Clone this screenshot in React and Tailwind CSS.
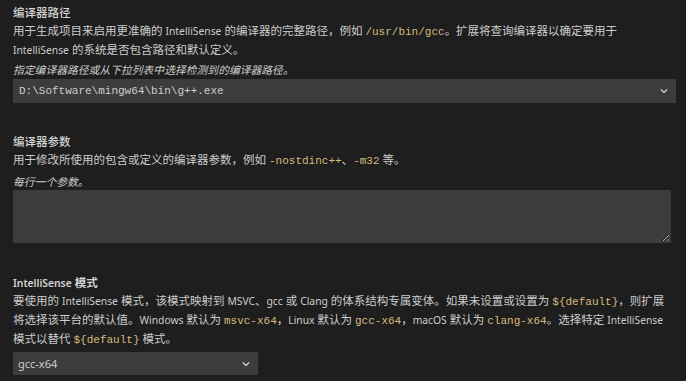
import React from "react";

const mono = { fontFamily: '"Liberation Mono", "DejaVu Sans Mono", monospace' };

const Code = ({ children }) => (
  <span className="text-[#d7ba7d] text-[11px]" style={mono}>
    {children}
  </span>
);

const L = ({ children }) => <span className="text-[10.3px]">{children}</span>;

const Chevron = () => (
  <svg width="10" height="10" viewBox="0 0 16 16" fill="none" stroke="#cccccc" strokeWidth="2" strokeLinecap="round" strokeLinejoin="round">
    <path d="M3.5 6l4.5 4.5L12.5 6" />
  </svg>
);

export default function App() {
  return (
    <div
      className="w-[686px] h-[381px] overflow-hidden bg-[#1e1e1e] text-[#cccccc] text-[11.5px] leading-[18px] pl-[13px] pt-[4px]"
      style={{ fontFamily: '"Noto Sans", "Noto Sans CJK SC", sans-serif' }}
    >
      {/* Section 1 */}
      <div className="flex flex-col">
        <div className="font-medium text-[#d4d4d4]">编译器路径</div>
        <div className="whitespace-nowrap">
          用于生成项目来启用更准确的 <L>IntelliSense</L> 的编译器的完整路径，例如 <Code>/usr/bin/gcc</Code>。扩展将查询编译器以确定要用于
          <br />
          <L>IntelliSense</L> 的系统是否包含路径和默认定义。
        </div>
        <div className="italic mt-[3px] leading-[16px] text-[10.8px]">指定编译器路径或从下拉列表中选择检测到的编译器路径。</div>
        <div className="mt-[1px] w-[663px] h-[24px] bg-[#3c3c3c] border border-[#3c3c3c] flex items-center justify-between pl-[5px] pr-[6px]">
          <span className="text-[11px] text-[#cccccc]" style={mono}>
            D:\Software\mingw64\bin\g++.exe
          </span>
          <Chevron />
        </div>
      </div>

      {/* Section 2 */}
      <div className="flex flex-col mt-[30px]">
        <div className="font-medium text-[#d4d4d4]">编译器参数</div>
        <div>
          用于修改所使用的包含或定义的编译器参数，例如 <Code>-nostdinc++</Code>、<Code>-m32</Code> 等。
        </div>
        <div className="italic mt-[4px] leading-[16px] text-[10.8px]">每行一个参数。</div>
        <textarea
          readOnly
          className="mt-0 w-[658px] h-[53px] bg-[#3c3c3c] border border-[#3c3c3c] outline-none resize-y block"
        />
      </div>

      {/* Section 3 */}
      <div className="flex flex-col mt-[31px]">
        <div className="font-semibold text-[#d4d4d4]">
          <L>IntelliSense</L> 模式
        </div>
        <div className="whitespace-nowrap">
          要使用的 <L>IntelliSense</L> 模式，该模式映射到 <L>MSVC</L>、<L>gcc</L> 或 <L>Clang</L> 的体系结构专属变体。如果未设置或设置为 <Code>{"${default}"}</Code>，则扩展
          <br />
          将选择该平台的默认值。<L>Windows</L> 默认为 <Code>msvc-x64</Code>，<L>Linux</L> 默认为 <Code>gcc-x64</Code>，<L>macOS</L> 默认为 <Code>clang-x64</Code>。选择特定 <L>IntelliSense</L>
          <br />
          模式以替代 <Code>{"${default}"}</Code> 模式。
        </div>
        <div className="mt-[3px] w-[245px] h-[23px] bg-[#3c3c3c] border border-[#3c3c3c] flex items-center justify-between pl-[4px] pr-[6px]">
          <span className="text-[11px]">gcc-x64</span>
          <Chevron />
        </div>
      </div>
    </div>
  );
}
